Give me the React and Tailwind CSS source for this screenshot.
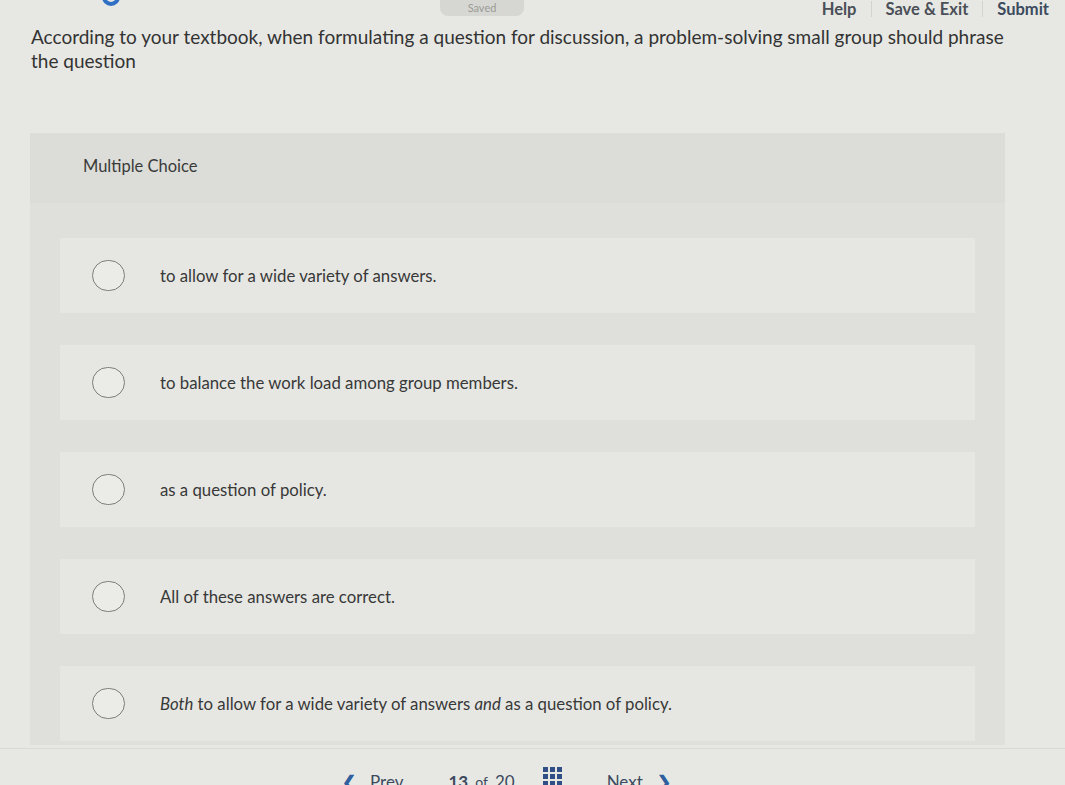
import React from "react";

const options = [
  { key: 1, content: "to allow for a wide variety of answers." },
  { key: 2, content: "to balance the work load among group members." },
  { key: 3, content: "as a question of policy." },
  { key: 4, content: "All of these answers are correct." },
  {
    key: 5,
    content: (
      <>
        <i>Both</i> to allow for a wide variety of answers <i>and</i> as a question of policy.
      </>
    ),
  },
];

export default function App() {
  return (
    <div
      className="w-[1065px] h-[785px] overflow-hidden bg-[#e7e8e3] text-[#3b3b3b]"
      style={{ fontFamily: "Lato, 'Liberation Sans', sans-serif" }}
    >
      {/* top bar */}
      <div className="h-[25px] flex items-start relative">
        <div className="ml-[102px] -mt-[12px] w-[18px] h-[18px] rounded-full border-[4px] border-[#2f6fc4]" />
        <div className="ml-[320px] -mt-[8px] w-[84px] h-[24px] rounded-[8px] bg-[#d6d7d2] flex items-end justify-center pb-[2px] text-[11px] leading-[12px] text-[#9a9b97]">
          Saved
        </div>
        <div className="ml-auto mr-[16px] mt-[0px] flex items-center h-[18px] text-[16.5px] font-bold text-[#4a4f58]">
          <span className="px-[14px]">Help</span>
          <span className="w-px h-[16px] bg-[#d3d4cf]" />
          <span className="px-[14px]">Save &amp; Exit</span>
          <span className="w-px h-[16px] bg-[#d3d4cf]" />
          <span className="pl-[14px] text-[#3c4a5e]">Submit</span>
        </div>
      </div>

      {/* question */}
      <div className="pl-[31px] pr-[50px] text-[19px] leading-[24px] text-[#333]">
        According to your textbook, when formulating a question for discussion, a problem-solving small group should phrase
        the question
      </div>

      {/* panel */}
      <div className="mt-[60px] ml-[30px] w-[975px] h-[612px] bg-[#dfe0db]">
        <div className="h-[70px] bg-[#dcddd8] pl-[53px] pt-[21px] text-[16.5px] text-[#3a3a3a]">Multiple Choice</div>
        <div className="pt-[35px] px-[30px] flex flex-col gap-[32px]">
          {options.map((o) => (
            <div key={o.key} className="h-[75px] bg-[#e6e7e2] flex items-center">
              <div className="ml-[32px] w-[33px] h-[31px] rounded-full border-[1.5px] border-[#7d7e7a] bg-[#ebece7] shrink-0" />
              <div className="ml-[35px] text-[16.75px] text-[#383838]">{o.content}</div>
            </div>
          ))}
        </div>
      </div>

      {/* footer */}
      <div className="border-t border-[#d9dad5] mt-[3px] h-[40px] flex items-start pt-[20px] text-[17px] text-[#3c4a5e]">
        <div className="ml-[342px] flex items-center gap-[14px]">
          <span className="text-[#2f5f9e] font-bold">&#10094;</span>
          <span>Prev</span>
        </div>
        <div className="ml-[45px] flex items-center gap-[7px]">
          <span className="font-bold">13</span>
          <span className="text-[14px]">of</span>
          <span>20</span>
        </div>
        <div className="ml-[28px] mt-[-2px] grid grid-cols-3 gap-[2px]">
          {[0, 1, 2, 3, 4, 5, 6, 7, 8].map((i) => (
            <span key={i} className="w-[5px] h-[5px] bg-[#2f4f86]" />
          ))}
        </div>
        <div className="ml-[45px] flex items-center gap-[14px]">
          <span>Next</span>
          <span className="text-[#2f5f9e] font-bold">&#10095;</span>
        </div>
      </div>
    </div>
  );
}
